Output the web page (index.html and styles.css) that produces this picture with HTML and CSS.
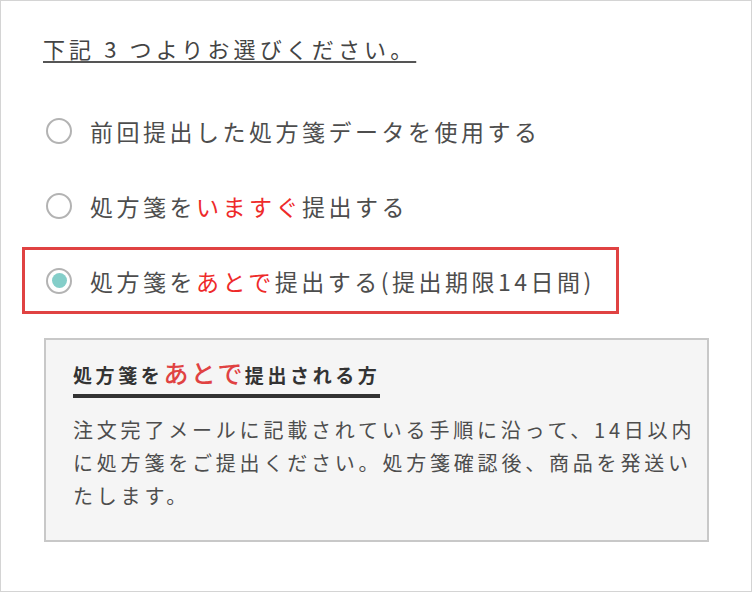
FILE: index.html
```html
<!DOCTYPE html>
<html lang="ja">
<head>
<meta charset="utf-8">
<link rel="stylesheet" href="styles.css">
</head>
<body>
<div class="page">
  <h2 class="lead">下記 3 つよりお選びください。</h2>
  <ul class="options">
    <li class="option">
      <span class="radio"></span>
      <span class="label">前回提出した処方箋データを使用する</span>
    </li>
    <li class="option">
      <span class="radio"></span>
      <span class="label">処方箋を<span class="em">いますぐ</span>提出する</span>
    </li>
    <li class="option selected">
      <span class="radio"><span class="dot"></span></span>
      <span class="label">処方箋を<span class="em">あとで</span>提出する(提出期限14日間)</span>
    </li>
  </ul>
  <div class="note">
    <h3 class="note-title">処方箋を<span class="big">あとで</span>提出される方</h3>
    <p class="note-text">注文完了メールに記載されている手順に沿って、14日以内に処方箋をご提出ください。処方箋確認後、商品を発送いたします。</p>
  </div>
</div>
</body>
</html>
```

FILE: styles.css
```css
* { box-sizing: border-box; }
html, body { margin: 0; padding: 0; background: #fff; }
body {
  font-family: "Noto Sans CJK JP", "Noto Sans", sans-serif;
  color: #4d4d4d;
}
.page {
  width: 752px;
  height: 592px;
  border: 1px solid #d4d4d4;
  padding-top: 32px;
  overflow: hidden;
}
.lead {
  margin: 0 0 0 42px;
  font-size: 22px;
  line-height: 30px;
  font-weight: 400;
  letter-spacing: 4.1px;
  color: #444;
  text-decoration: underline;
  text-decoration-thickness: 2px;
  text-underline-offset: 3px;
  text-decoration-color: #555;
}
.options {
  list-style: none;
  margin: 34px 0 0 21px;
  padding: 0;
  display: flex;
  flex-direction: column;
  gap: 8px;
}
.option {
  width: 597px;
  height: 67px;
  border: 3px solid transparent;
  padding-left: 21px;
  display: flex;
  align-items: center;
  gap: 18px;
}
.option.selected { border-color: #e04242; }
.radio {
  width: 26px;
  height: 26px;
  border: 2px solid #b3b3b3;
  border-radius: 50%;
  background: #fff;
  display: flex;
  align-items: center;
  justify-content: center;
  flex: none;
}
.dot {
  width: 15px;
  height: 15px;
  border-radius: 50%;
  background: #84cec9;
}
.label {
  font-size: 23px;
  line-height: 30px;
  letter-spacing: 3.5px;
  color: #4d4d4d;
  white-space: nowrap;
}
.em { color: #ee2a2a; }
.note {
  margin: 24px 0 0 43px;
  width: 665px;
  height: 204px;
  border: 2px solid #c8c8c8;
  background: #f5f5f5;
  padding: 17px 0 0 27px;
}
.note-title {
  display: inline-block;
  margin: 0;
  font-size: 19px;
  font-weight: 700;
  line-height: 30px;
  letter-spacing: 3.6px;
  color: #333;
  border-bottom: 4px solid #333;
  padding-bottom: 4px;
}
.note-title .big {
  font-size: 25px;
  font-weight: 500;
  letter-spacing: 2.4px;
  color: #e04242;
}
.note-text {
  margin: 15px 0 0;
  width: 632px;
  font-size: 20px;
  line-height: 33px;
  letter-spacing: 3.8px;
  color: #4d4d4d;
}
```
